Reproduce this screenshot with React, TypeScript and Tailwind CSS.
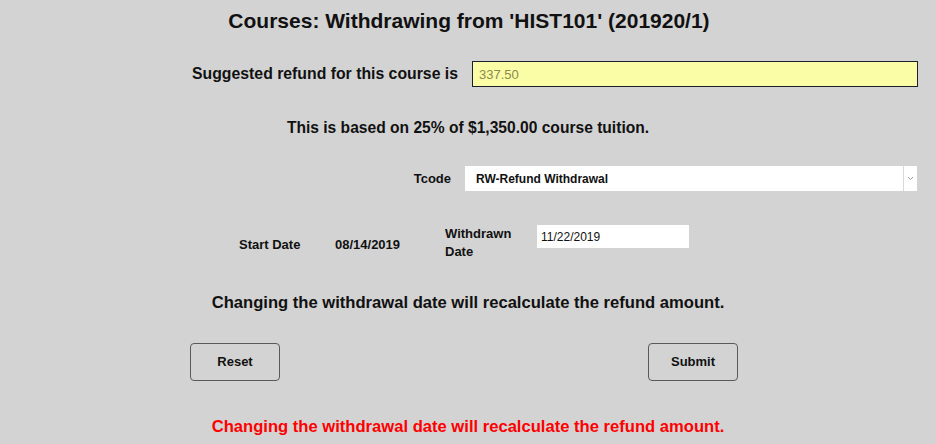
export default function App() {
  const font = "font-['Liberation_Sans',Arial,sans-serif]";
  return (
    <div className={`w-[936px] h-[444px] bg-[#d3d3d3] text-[#111] ${font} overflow-hidden`}>
      {/* title */}
      <div className="h-[40px] flex items-center justify-center pt-[1px]">
        <h1 className="text-[21px] font-bold pl-[2px]">
          Courses: Withdrawing from 'HIST101' (201920/1)
        </h1>
      </div>

      {/* suggested refund */}
      <div className="mt-[21px] flex items-center h-[26px]">
        <div className="w-[472px] pr-[14px] text-right text-[15.8px] font-bold">
          Suggested refund for this course is
        </div>
        <input
          readOnly
          value="337.50"
          className="w-[446px] h-[26px] bg-[#fbfda6] border border-[#1c1f2e] px-[6px] text-[13px] text-[#8a8a4a] outline-none"
        />
      </div>

      <div className="mt-[30px] h-[22px] flex items-center justify-center text-[15.6px] font-bold">
        This is based on 25% of $1,350.00 course tuition.
      </div>

      {/* tcode */}
      <div className="mt-[27px] flex items-center h-[25px]">
        <div className="w-[465px] pr-[14px] text-right text-[13px] font-bold">Tcode</div>
        <div className="w-[452px] h-[25px] bg-white flex items-center">
          <span className="flex-1 pl-[11px] text-[12px] font-bold">RW-Refund Withdrawal</span>
          <div className="w-[14px] h-full border-l border-[#d8d8d8] flex items-center justify-center">
            <svg width="7" height="5" viewBox="0 0 7 5">
              <path d="M1 1l2.5 2.5L6 1" fill="none" stroke="#9a9a9a" strokeWidth="1" />
            </svg>
          </div>
        </div>
      </div>

      {/* dates */}
      <div className="mt-[34px] flex items-start h-[36px] text-[13px] font-bold">
        <div className="ml-[239px] w-[96px] mt-[10px]">Start Date</div>
        <div className="w-[110px] mt-[10px]">08/14/2019</div>
        <div className="w-[92px] leading-[18px]">
          Withdrawn
          <br />
          Date
        </div>
        <input
          readOnly
          value="11/22/2019"
          className="w-[152px] h-[23px] bg-white px-[4px] text-[12px] font-medium text-[#111] outline-none"
        />
      </div>

      <div className="mt-[31px] h-[22px] flex items-center justify-center text-[16.6px] font-bold">
        Changing the withdrawal date will recalculate the refund amount.
      </div>

      {/* buttons */}
      <div className="mt-[29px] flex h-[38px]">
        <button className="ml-[190px] w-[90px] h-[38px] rounded-[4px] border border-[#5a5a5a] text-[13px] font-bold">
          Reset
        </button>
        <button className="ml-[368px] w-[90px] h-[38px] rounded-[4px] border border-[#5a5a5a] text-[13px] font-bold">
          Submit
        </button>
      </div>

      <div className="mt-[35px] h-[22px] flex items-center justify-center text-[16.6px] font-bold text-[#ff0000]">
        Changing the withdrawal date will recalculate the refund amount.
      </div>
    </div>
  );
}
